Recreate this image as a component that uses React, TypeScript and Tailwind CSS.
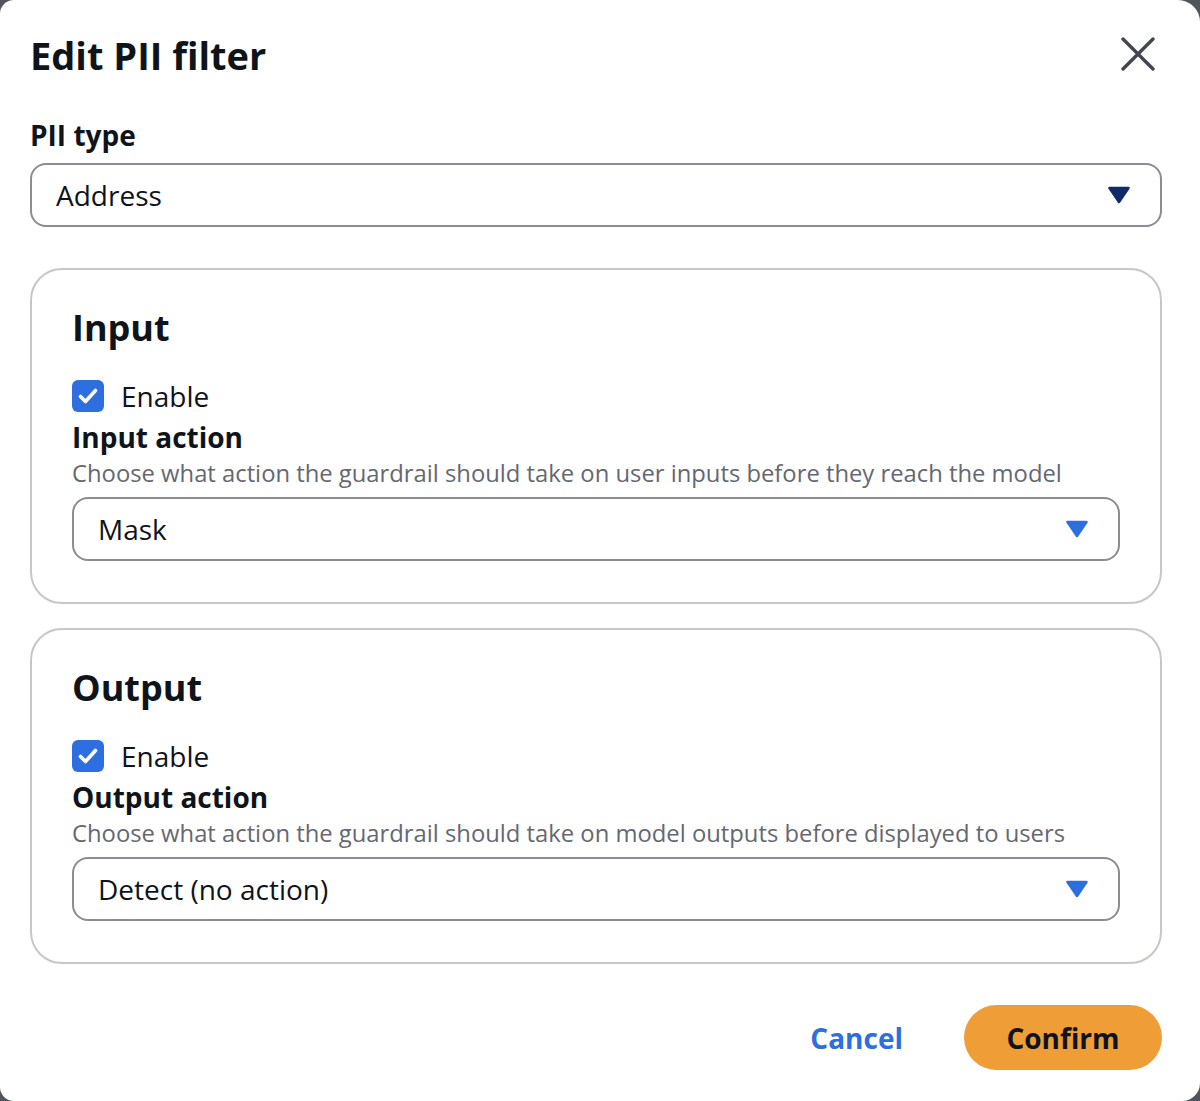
import React from "react";

const font = { fontFamily: '"Open Sans", "Noto Sans", Arial, sans-serif' };

function Caret({ color }: { color: string }) {
  return (
    <svg width="22" height="18" viewBox="0 0 22 18" className="shrink-0">
      <path d="M1.5 2 L20.5 2 L11 16 Z" fill={color} stroke={color} strokeWidth="2.5" strokeLinejoin="round" />
    </svg>
  );
}

function Check() {
  return (
    <svg width="32" height="32" viewBox="0 0 32 32" className="shrink-0">
      <rect x="0" y="0" width="32" height="32" rx="6" fill="#2d6ee0" />
      <path d="M8.5 16.5 L13.5 21.5 L23.5 10.5" fill="none" stroke="#ffffff" strokeWidth="3.6" strokeLinecap="round" strokeLinejoin="round" />
    </svg>
  );
}

function Select({ value, caret, className }: { value: string; caret: string; className?: string }) {
  return (
    <div
      className={
        "flex h-[64px] items-center justify-between rounded-[16px] border-2 border-[#8c8c94] bg-white pl-[24px] pr-[30px] " +
        (className ?? "")
      }
    >
      <span className="text-[28px] leading-[36px] text-[#0f141a]">{value}</span>
      <Caret color={caret} />
    </div>
  );
}

function Section({ title, label, desc, value }: { title: string; label: string; desc: string; value: string }) {
  return (
    <div className="rounded-[32px] border-2 border-[#c6c6cd] px-[40px] pt-[34px] pb-[41px]">
      <div className="text-[36px] font-bold leading-[48px] text-[#0f141a]">{title}</div>
      <div className="mt-[24px] flex h-[40px] items-center gap-[17px]">
        <Check />
        <span className="text-[28px] leading-[36px] text-[#0f141a]">Enable</span>
      </div>
      <div className="mt-[3px] text-[28px] font-bold leading-[36px] text-[#0f141a]">{label}</div>
      <div className="mt-[2px] text-[23.8px] leading-[32px] text-[#656871]">{desc}</div>
      <Select className="mt-[8px]" value={value} caret="#2d6ee0" />
    </div>
  );
}

export default function App() {
  return (
    <div className="h-[1101px] w-[1200px] overflow-hidden bg-[#50545c]" style={font}>
      <div className="h-full w-full rounded-tl-[14px] rounded-tr-[22px] rounded-br-[18px] rounded-bl-[14px] bg-white pl-[30px] pr-[38px] pt-[30px]">
        <div className="flex items-center justify-between">
          <h1 className="text-[38px] font-bold leading-[50px] text-[#0f141a]">Edit PII filter</h1>
          <svg width="34" height="34" viewBox="0 0 34 34" className="mr-[7px] mt-[-2px]">
            <path d="M2 2 L32 32 M32 2 L2 32" stroke="#424650" strokeWidth="3.4" strokeLinecap="round" />
          </svg>
        </div>
        <div className="mt-[37px] text-[28px] font-bold leading-[36px] text-[#0f141a]">PII type</div>
        <Select className="mt-[10px]" value="Address" caret="#0f2b69" />
        <div className="mt-[41px] flex flex-col gap-[24px]">
          <Section
            title="Input"
            label="Input action"
            desc="Choose what action the guardrail should take on user inputs before they reach the model"
            value="Mask"
          />
          <Section
            title="Output"
            label="Output action"
            desc="Choose what action the guardrail should take on model outputs before displayed to users"
            value="Detect (no action)"
          />
        </div>
        <div className="mt-[41px] flex items-center justify-end">
          <span className="mr-[61px] text-[28px] font-bold leading-[36px] text-[#2d6ee0]">Cancel</span>
          <div className="flex h-[65px] w-[198px] items-center justify-center rounded-full bg-[#ef9e37]">
            <span className="text-[28px] font-bold leading-[36px] text-[#0f141a]">Confirm</span>
          </div>
        </div>
      </div>
    </div>
  );
}
